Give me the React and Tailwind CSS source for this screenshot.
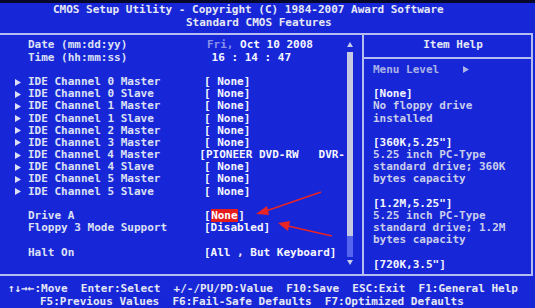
const rows = [
  { arrow: true, label: 'IDE Channel 0 Master', value: '[ None]' },
  { arrow: true, label: 'IDE Channel 0 Slave', value: '[ None]' },
  { arrow: true, label: 'IDE Channel 1 Master', value: '[ None]' },
  { arrow: true, label: 'IDE Channel 1 Slave', value: '[ None]' },
  { arrow: true, label: 'IDE Channel 2 Master', value: '[ None]' },
  { arrow: true, label: 'IDE Channel 3 Master', value: '[ None]' },
  { arrow: true, label: 'IDE Channel 4 Master', value: '[PIONEER DVD-RW   DVR-' },
  { arrow: true, label: 'IDE Channel 4 Slave', value: '[ None]' },
  { arrow: true, label: 'IDE Channel 5 Master', value: '[ None]' },
  { arrow: true, label: 'IDE Channel 5 Slave', value: '[ None]' },
]

const help = [
  { head: true, text: '[None]' },
  { text: 'No floppy drive' },
  { text: 'installed' },
  { text: '' },
  { head: true, text: '[360K,5.25"]' },
  { text: '5.25 inch PC-Type' },
  { text: 'standard drive; 360K' },
  { text: 'bytes capacity' },
  { text: '' },
  { head: true, text: '[1.2M,5.25"]' },
  { text: '5.25 inch PC-Type' },
  { text: 'standard drive; 1.2M' },
  { text: 'bytes capacity' },
  { text: '' },
  { head: true, text: '[720K,3.5"]' },
]

function Tri({ className }) {
  return (
    <svg width="6" height="7" viewBox="0 0 6 7" className={className}>
      <path d="M0 0 L6 3.5 L0 7 Z" fill="currentColor" />
    </svg>
  )
}

function Row({ arrow, label, children }) {
  return (
    <div className="flex h-[12.2px] items-center whitespace-pre">
      <div className="flex w-[28px] items-center pl-[15px] text-[#dde0f4]">
        {arrow && <Tri />}
      </div>
      <div className="w-[176px] text-[#dde0f4]">{label}</div>
      <div className="text-[#f6f6ff]">{children}</div>
    </div>
  )
}

export default function App() {
  return (
    <div className="relative h-[308px] w-[535px] overflow-hidden bg-[#1727d8] font-['DejaVu_Sans_Mono',monospace] text-[11px] font-bold leading-[12.2px]">
      <div className="h-[3px] bg-[#05082a]" />

      <div className="whitespace-pre leading-[13px] text-[#e6e8f4]">
        <div className="pl-[53px]">CMOS Setup Utility - Copyright (C) 1984-2007 Award Software</div>
        <div className="pl-[186px]">Standard CMOS Features</div>
      </div>

      <div className="mt-[4px] flex h-[243px] w-[533px] border-y-2 border-r-2 border-[#b4bcf2]">
        <div className="flex w-[362px]">
          <div className="w-[345px] overflow-hidden pt-[4.4px]">
            <Row label="Date (mm:dd:yy)">
              <span className="ml-[3px] text-[#8a93ea]">Fri,</span> Oct 10 2008
            </Row>
            <Row label="Time (hh:mm:ss)">
              <span className="ml-[1px]"> 16 : 14 : 47</span>
            </Row>
            <div className="h-[12.2px]" />
            {rows.map((r) => (
              <Row key={r.label} arrow={r.arrow} label={r.label}>
                {r.value}
              </Row>
            ))}
            <div className="h-[12.2px]" />
            <Row label="Drive A">
              [<span className="bg-[#e41c1c] px-[0.5px] text-white">None</span>]
            </Row>
            <Row label="Floppy 3 Mode Support">[Disabled]</Row>
            <div className="h-[12.2px]" />
            <Row label="Halt On">[All , But Keyboard]</Row>
          </div>

          <div className="flex w-[9px] flex-col items-center pt-[7px] text-[#c8cce8]">
            <svg width="6" height="5" viewBox="0 0 6 5">
              <path d="M3 0 L6 5 L0 5 Z" fill="currentColor" />
            </svg>
            <div className="mt-[5px] h-[184px] w-[6px] bg-[#c6c9e2]" />
            <div className="h-[21px] w-[6px] bg-[#5665ee]" />
            <svg width="6" height="5" viewBox="0 0 6 5" className="mt-[3px]">
              <path d="M0 0 L6 0 L3 5 Z" fill="currentColor" />
            </svg>
          </div>
        </div>

        <div className="flex flex-1 flex-col border-l-2 border-[#b4bcf2]">
          <div className="pl-[11px] pt-[4.4px] text-center text-[#e6e8f6]">Item Help</div>
          <div className="mt-[5px] border-t-2 border-[#b4bcf2]" />
          <div className="whitespace-pre pl-[9px] pt-[5.2px]">
            <div className="flex h-[12.2px] items-center text-[#aab2e6]">
              Menu Level
              <Tri className="ml-[24px]" />
            </div>
            <div className="h-[12.2px]" />
            {help.map((h, i) => (
              <div
                key={i}
                className={`h-[12.2px] ${h.head ? 'text-[#f4f5ff]' : 'text-[#c9cdec]'}`}
              >
                {h.text}
              </div>
            ))}
          </div>
        </div>
      </div>

      <div className="whitespace-pre pt-[5.5px] leading-[13px] text-[#e6e8f4]">
        <div className="pl-[8px]">↑↓→←:Move  Enter:Select  +/-/PU/PD:Value  F10:Save  ESC:Exit  F1:General Help</div>
        <div className="pl-[40px]">F5:Previous Values  F6:Fail-Safe Defaults  F7:Optimized Defaults</div>
      </div>

      <svg className="pointer-events-none absolute inset-0" width="535" height="308">
        <line x1="321" y1="192" x2="266" y2="211" stroke="#e82424" strokeWidth="1.5" />
        <path d="M256 214 L267 206 L269 215 Z" fill="#e82424" />
        <line x1="332" y1="236" x2="288" y2="226" stroke="#e82424" strokeWidth="1.5" />
        <path d="M278 223 L290 221 L288 231 Z" fill="#e82424" />
      </svg>
    </div>
  )
}
